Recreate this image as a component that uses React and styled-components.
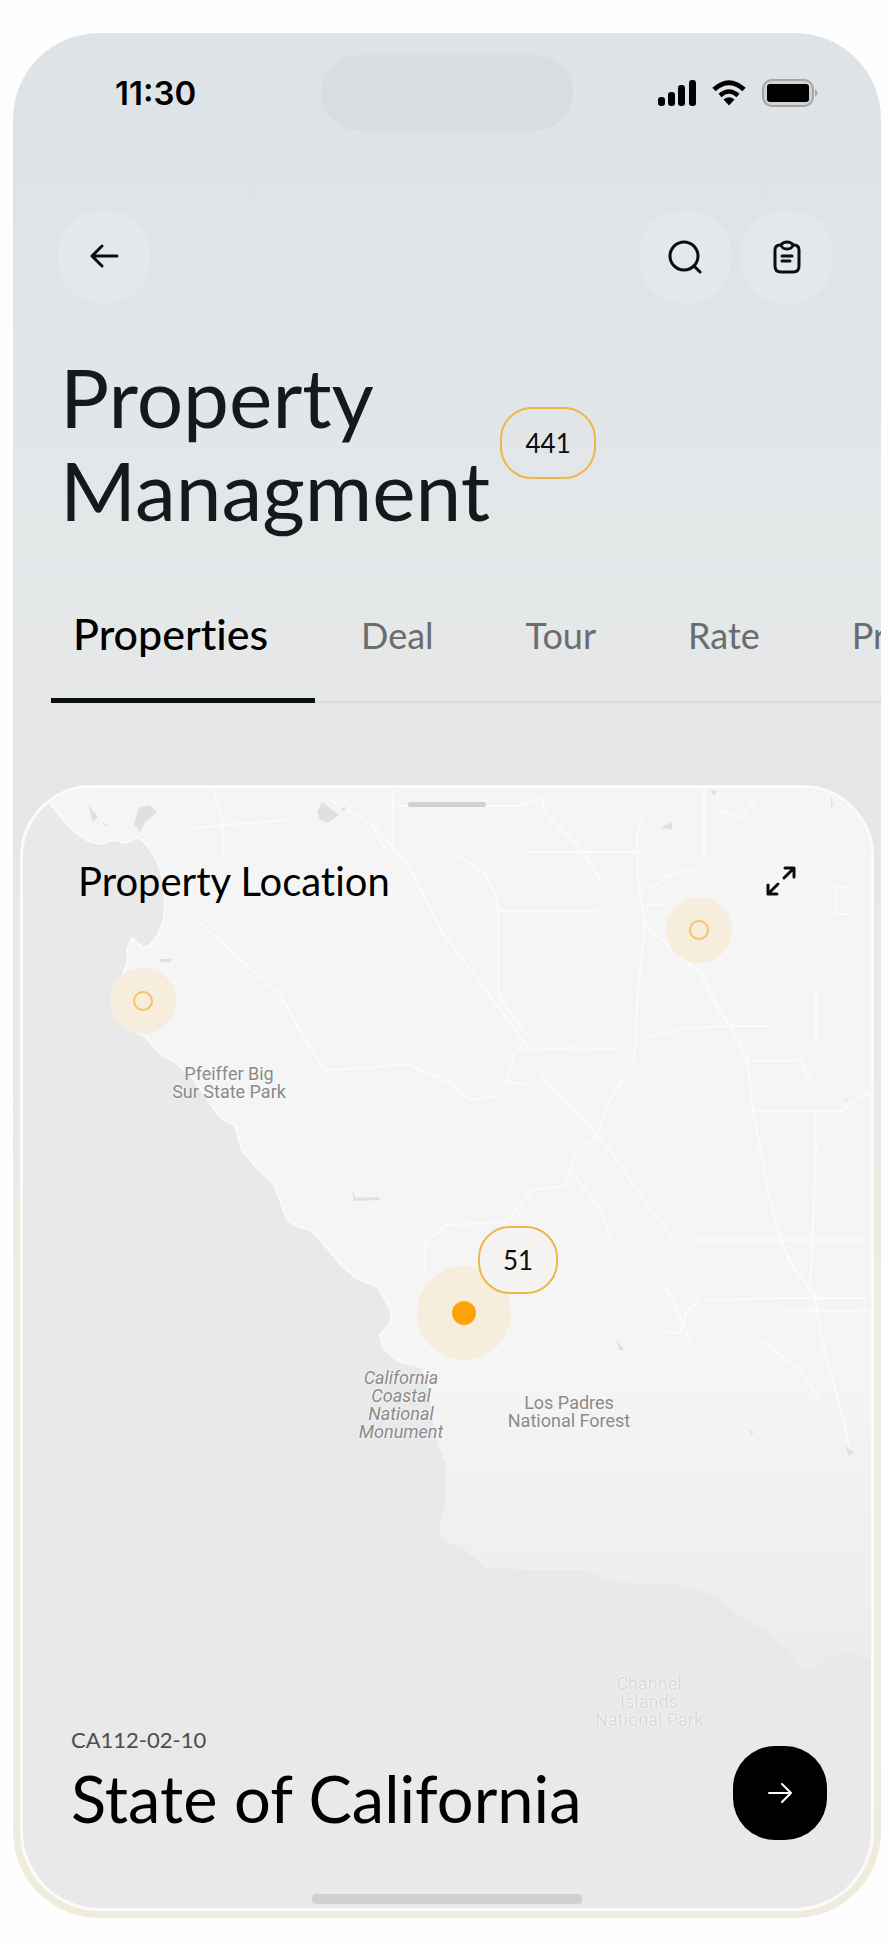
import React from "react";
import styled, { createGlobalStyle } from "styled-components";

const GlobalStyle = createGlobalStyle`
  *, *::before, *::after { box-sizing: border-box; }
  body { margin: 0; background: #fefefe; }
  button { font: inherit; color: inherit; border: 0; padding: 0; background: none; cursor: pointer; }
  h1, h2, h3, p { margin: 0; font-weight: 400; }
`;

const Page = styled.main`
  padding: 33px 13px 27px;
  font-family: Lato, "Liberation Sans", sans-serif;
  font-variant-ligatures: none;
  color: #0b0d0e;
`;

const Phone = styled.div`
  display: flex;
  flex-direction: column;
  padding: 22px 7px 7px;
  border-radius: 86px;
  overflow: hidden;
  background: linear-gradient(180deg, #dee3e7 0, #e0e4e7 240px, #e5e8e9 560px, #e5e7e7 760px, #e9e9e7 1000px, #f0ece0 1300px, #efebdd 100%);
`;

const StatusBar = styled.header`
  display: grid;
  grid-template-columns: 1fr 252px 1fr;
  align-items: center;
  height: 76px;
`;

const Clock = styled.time`
  padding-left: 95px;
  font: 600 33px/40px Inter, "Liberation Sans", sans-serif;
  color: #000;
`;

const Island = styled.div`
  height: 76px;
  border-radius: 38px;
  background: #d9dce0;
`;

const Indicators = styled.div`
  display: flex;
  justify-content: flex-end;
  align-items: center;
  gap: 15px;
  padding-right: 56px;
`;

const Toolbar = styled.nav`
  display: flex;
  gap: 10px;
  padding: 80px 41px 0 38px;
`;

const RoundButton = styled.button`
  display: grid;
  place-items: center;
  width: 92px;
  height: 92px;
  border-radius: 42px;
  background: #e5e8eb;
  &:first-child { margin-right: auto; }
`;

const TitleRow = styled.div`
  display: flex;
  align-items: center;
  gap: 10px;
  padding: 47px 40px 0;
`;

const Title = styled.h1`
  font-size: 82px;
  line-height: 93px;
  color: #15191b;
`;

const Badge = styled.span`
  display: grid;
  place-items: center;
  width: ${(p) => (p.$small ? 80 : 96)}px;
  height: ${(p) => (p.$small ? 68 : 72)}px;
  border: 2px solid #f0b647;
  border-radius: 32px;
  background: ${(p) => (p.$small ? "#f5f4f3" : "transparent")};
  font-size: 26px;
  line-height: 32px;
`;

const Tabs = styled.div`
  display: flex;
  align-items: stretch;
  height: 116px;
  margin: 51px -7px 0 31px;
  overflow: hidden;
`;

const Tab = styled.button`
  flex: none;
  padding: ${(p) => (p.$active ? "0 0 18px 22px" : "0 46px 18px")};
  width: ${(p) => (p.$active ? "264px" : "auto")};
  text-align: left;
  white-space: nowrap;
  border-bottom: ${(p) => (p.$active ? "5px solid #0c0f10" : "2px solid #d9dcdc")};
  font-size: ${(p) => (p.$active ? 43 : 36)}px;
  font-weight: ${(p) => (p.$active ? 500 : 400)};
  line-height: 48px;
  color: ${(p) => (p.$active ? "#000" : "#6a6d6f")};
`;

const Sheet = styled.section`
  position: relative;
  display: flex;
  flex-direction: column;
  min-height: 1126px;
  margin-top: 82px;
  border: 3px solid #fbfbfa;
  border-radius: 72px 72px 80px 80px;
  overflow: hidden;
  background: #e9e9e9;
`;

const MapCanvas = styled.div`
  position: absolute;
  inset: 0;
  overflow: hidden;
  > svg { display: block; width: 100%; height: 100%; }
`;

const Spot = styled.div`
  position: absolute;
  left: calc(50% + ${(p) => p.$x}px);
  top: ${(p) => p.$y}px;
  transform: translate(-50%, -50%);
`;

const Pin = styled.button`
  display: grid;
  place-items: center;
  width: ${(p) => (p.$active ? 94 : 66)}px;
  height: ${(p) => (p.$active ? 94 : 66)}px;
  border-radius: 50%;
  background: #f6eddd;
  &::before {
    content: "";
    width: ${(p) => (p.$active ? 24 : 20)}px;
    height: ${(p) => (p.$active ? 24 : 20)}px;
    border-radius: 50%;
    border: 2px solid ${(p) => (p.$active ? "#ffa20a" : "#f3c368")};
    background: ${(p) => (p.$active ? "#ffa20a" : "transparent")};
  }
`;

const Place = styled.p`
  font-family: Roboto, "Liberation Sans", sans-serif;
  font-size: 18px;
  line-height: 18px;
  text-align: center;
  white-space: pre;
  font-style: ${(p) => (p.$italic ? "italic" : "normal")};
  color: ${(p) => (p.$faded ? "#dadada" : "#8a8a8a")};
  text-shadow: 0 0 2px #fafafa, 0 0 2px #fafafa;
`;

const Grabber = styled.div`
  position: relative;
  align-self: center;
  width: 78px;
  height: 5px;
  margin-top: 14px;
  border-radius: 2px;
  background: #d0d0d0;
`;

const SheetHead = styled.div`
  position: relative;
  display: flex;
  justify-content: space-between;
  align-items: center;
  padding: 28px 44px 0 55px;
`;

const SheetTitle = styled.h2`
  font-size: 40px;
  line-height: 48px;
  color: #000;
`;

const ExpandButton = styled.button`
  display: grid;
  place-items: center;
  width: 92px;
  height: 92px;
  border-radius: 42px;
  background: #f6f6f6;
`;

const SheetFoot = styled.div`
  position: relative;
  display: flex;
  justify-content: space-between;
  align-items: flex-end;
  margin-top: auto;
  padding: 0 44px 54px 48px;
`;

const Code = styled.p`
  font-size: 22px;
  line-height: 32px;
  color: #4c4c4c;
`;

const Region = styled.h3`
  font-size: 65px;
  line-height: 84px;
  color: #000;
`;

const GoButton = styled.button`
  display: grid;
  place-items: center;
  width: 94px;
  height: 94px;
  border-radius: 42px;
  background: #000;
  color: #fff;
`;

const HomeBar = styled.div`
  position: relative;
  align-self: center;
  width: 270px;
  height: 10px;
  margin-bottom: 4px;
  border-radius: 4px;
  background: #d0d0cf;
`;

const Line = ({ size, width = 2, height, viewBox, children }) => (
  <svg width={size} height={height || size} viewBox={viewBox || `0 0 ${size} ${size}`} fill="none" stroke="currentColor" strokeWidth={width} strokeLinecap="round" strokeLinejoin="round" aria-hidden="true">
    {children}
  </svg>
);

const Signal = () => (
  <svg width="38" height="26" viewBox="0 0 38 26" aria-hidden="true">
    <rect x="0" y="17" width="7" height="9" rx="3" />
    <rect x="10" y="12" width="7" height="14" rx="3" />
    <rect x="20" y="5" width="7" height="21" rx="3" />
    <rect x="31" y="0" width="7" height="26" rx="3" />
  </svg>
);

const Wifi = () => (
  <svg width="36" height="26" viewBox="0 0 36 26" aria-hidden="true">
    <path d="M3 9.5Q18-4 33 9.5" fill="none" stroke="#000" strokeWidth="5" />
    <path d="M9 15.5Q18 7.5 27 15.5" fill="none" stroke="#000" strokeWidth="4.5" />
    <path d="M12.5 19.5Q18 15 23.5 19.5L18 25.5Z" />
  </svg>
);

const Battery = () => (
  <svg width="56" height="28" viewBox="0 0 56 28" aria-hidden="true">
    <rect x="1" y="1" width="50" height="26" rx="9" fill="#d0d2d4" stroke="#a3a5a7" strokeWidth="2" />
    <rect x="5" y="5" width="42" height="18" rx="3" />
    <path d="M53 10Q58 14 53 18Z" fill="#a3a5a7" />
  </svg>
);

const land =
  "M45 797L62 818L75 832L88 841L100 844L115 840L125 843L138 837L148 846L156 859L162 875L165 900L164 920L158 935L150 945L143 948L137 942L132 938L127 950L128 960L122 978L118 992L124 1014L134 1032L145 1036L152 1045L162 1055L175 1062L190 1075L205 1095L213 1108L220 1117L235 1126L242 1150L256 1167L273 1183L280 1200L287 1220L299 1227L311 1230L329 1250L342 1266L356 1278L378 1287L385 1299L391 1310L391 1322L380 1335L382 1345L387 1352L400 1362L422 1367L429 1383L433 1415L440 1447L447 1463L447 1503L440 1527L442 1538L467 1550L485 1567L534 1569L587 1569L609 1580L636 1583L671 1583L698 1588L720 1598L742 1617L770 1632L790 1650L800 1668L812 1668L828 1655L850 1652L874 1660V780H30Z";

const roads = [
  "M200 923L280 995L304 1037L324 1070L365 1068L408 1064L452 1084L470 1100L497 1096",
  "M212 785L222 815L224 858M193 828L236 824L290 820M330 800L372 825L385 850",
  "M393 790V845M372 825L405 860L444 935L475 975L515 1030L530 1050",
  "M395 806H520L542 798L543 810L580 848L600 880M528 852H640",
  "M450 850L484 873L497 898L498 912L498 995L515 1018L527 1036",
  "M500 911H598M643 815L637 835L638 880L645 925L638 990L635 1050L633 1060",
  "M516 1050L575 1048L618 1049M514 1055L505 1082L526 1084",
  "M645 925L668 945L702 975L716 1005L732 1030L748 1062L752 1105L770 1200L781 1240L790 1262L815 1296L822 1340L846 1430L850 1455",
  "M648 1037L685 1028L732 1026L770 1026",
  "M754 1111H842L863 1094H872M815 1115L816 1150L812 1250L810 1285",
  "M540 1075L580 1115L610 1150L640 1195L672 1237L700 1265L730 1296",
  "M622 1080L606 1106L598 1135L575 1155L565 1186L533 1190L506 1222L446 1225L426 1242L424 1275",
  "M570 1170L600 1208L612 1240M690 1240H874M704 1300L780 1298L865 1298M700 1299L686 1312L680 1333L665 1332M780 1310L874 1312",
  "M645 905H666M650 890L667 876L694 869M704 782V855L700 860M720 810L740 818L755 800M836 885V914H848M836 887L850 887",
  "M760 1340L800 1370L820 1400M665 1285L678 1310L692 1348",
  "M752 1061L786 1061L800 1060L812 1085M816 990V1040",
];

const waters = [
  "M88 805L98 817L93 822ZM139 808L150 805L157 812L145 822L140 832L134 824ZM317 812L322 802L339 815L328 823L320 820ZM102 822L108 825L106 827ZM340 808L347 807L344 811Z",
  "M660 828L672 822L672 829ZM711 791L717 790L714 796ZM831 795L833 805L831 807ZM160 959H171V962H160Z",
  "M352 1190L356 1198L378 1197L376 1191L380 1200L354 1201Z",
  "M617 1340L624 1350L619 1350ZM846 1446L854 1453L848 1456ZM750 1430L754 1432L751 1435ZM845 1098L848 1099L846 1102Z",
];

const MapDrawing = () => (
  <svg viewBox="23 788 848 1120" preserveAspectRatio="xMidYMin slice" aria-hidden="true">
    <defs>
      <linearGradient id="landFade" gradientUnits="userSpaceOnUse" x1="0" y1="1360" x2="0" y2="1690">
        <stop offset="0" stopColor="#f5f5f5" />
        <stop offset="1" stopColor="#ebebeb" />
      </linearGradient>
      <linearGradient id="shoreFade" gradientUnits="userSpaceOnUse" x1="0" y1="1300" x2="0" y2="1600">
        <stop offset="0" stopColor="#fafafa" />
        <stop offset="1" stopColor="#ededed" />
      </linearGradient>
    </defs>
    <path d={land} fill="url(#landFade)" stroke="url(#shoreFade)" strokeWidth="2" strokeLinejoin="round" />
    <g fill="none" stroke="#fbfbfb" strokeWidth="2" strokeLinejoin="round">
      {roads.map((d) => <path key={d} d={d} />)}
    </g>
    <g fill="#e0e0e0">
      {waters.map((d) => <path key={d} d={d} />)}
    </g>
  </svg>
);

const tabs = ["Properties", "Deal", "Tour", "Rate", "Pr"];

const places = [
  { x: -218, y: 295, text: "Pfeiffer Big\nSur State Park" },
  { x: -46, y: 617, text: "California\nCoastal\nNational\nMonument", italic: true },
  { x: 122, y: 624, text: "Los Padres\nNational Forest" },
  { x: 202, y: 914, text: "Channel\nIslands\nNational Park", faded: true },
];

const pins = [
  { x: -304, y: 213, label: "Monterey properties" },
  { x: 252, y: 142, label: "Fresno properties" },
  { x: 17, y: 525, label: "Central coast properties", active: true },
];

export default function App() {
  return (
    <>
      <GlobalStyle />
      <Page>
        <Phone>
          <StatusBar>
            <Clock>11:30</Clock>
            <Island />
            <Indicators>
              <Signal />
              <Wifi />
              <Battery />
            </Indicators>
          </StatusBar>
          <Toolbar>
            <RoundButton aria-label="Back">
              <Line size={30} height={26} width={3} viewBox="0 0 30 26"><path d="M28 12H3M13 2L3 12L13 22" /></Line>
            </RoundButton>
            <RoundButton aria-label="Search">
              <Line size={34} width={3}><circle cx="16" cy="16" r="14" /><path d="M26 26L32 32" /></Line>
            </RoundButton>
            <RoundButton aria-label="Notes">
              <Line size={28} height={34} width={3} viewBox="0 0 28 34">
                <path d="M8 5H7Q2 5 2 10V26Q2 32 8 32H20Q26 32 26 26V10Q26 5 21 5H20" />
                <path d="M8 5Q10 2 14 2T20 5Q19 9 14 9T8 5ZM9 16H19M9 21H17" />
              </Line>
            </RoundButton>
          </Toolbar>
          <TitleRow>
            <Title>Property<br />Managment</Title>
            <Badge>441</Badge>
          </TitleRow>
          <Tabs role="tablist">
            {tabs.map((name, i) => (
              <Tab key={name} role="tab" aria-selected={i === 0} $active={i === 0}>{name}</Tab>
            ))}
          </Tabs>
          <Sheet>
            <MapCanvas>
              <MapDrawing />
              {places.map((p) => (
                <Spot key={p.text} $x={p.x} $y={p.y}>
                  <Place $italic={p.italic} $faded={p.faded}>{p.text}</Place>
                </Spot>
              ))}
              {pins.map((p) => (
                <Spot key={p.label} $x={p.x} $y={p.y}>
                  <Pin $active={p.active} aria-label={p.label} />
                </Spot>
              ))}
              <Spot $x={71} $y={472}><Badge $small>51</Badge></Spot>
            </MapCanvas>
            <Grabber />
            <SheetHead>
              <SheetTitle>Property Location</SheetTitle>
              <ExpandButton aria-label="Expand map">
                <Line size={32} width={3}><path d="M19 13L29 3M20 3H29V12M13 19L3 29M3 20V29H12" /></Line>
              </ExpandButton>
            </SheetHead>
            <SheetFoot>
              <div>
                <Code>CA112-02-10</Code>
                <Region>State of California</Region>
              </div>
              <GoButton aria-label="Open region">
                <Line size={24}><path d="M1 12H23M14 3L23 12L14 21" /></Line>
              </GoButton>
            </SheetFoot>
            <HomeBar />
          </Sheet>
        </Phone>
      </Page>
    </>
  );
}
